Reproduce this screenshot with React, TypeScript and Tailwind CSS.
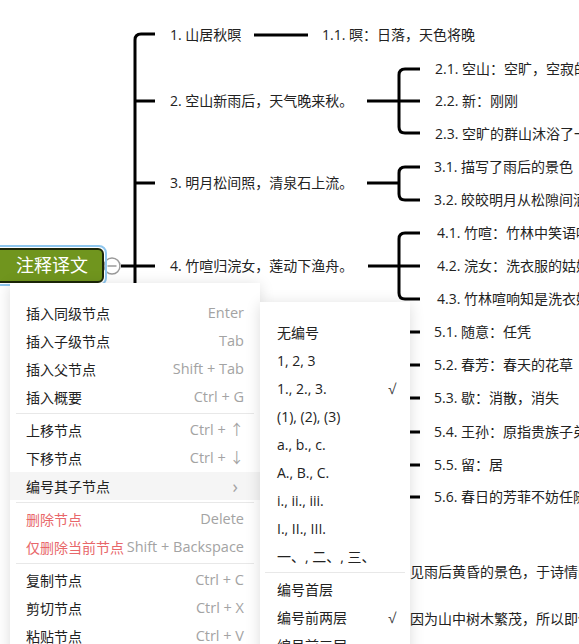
import React from "react";

const font = { fontFamily: '"Open Sans", "Noto Sans CJK SC", sans-serif' };

type N = { x: number; y: number; t: string };

const nodes: N[] = [
  { x: 170, y: 35, t: "1. 山居秋暝" },
  { x: 170, y: 101, t: "2. 空山新雨后，天气晚来秋。" },
  { x: 170, y: 183, t: "3. 明月松间照，清泉石上流。" },
  { x: 170, y: 266, t: "4. 竹喧归浣女，莲动下渔舟。" },
  { x: 322, y: 35, t: "1.1. 暝：日落，天色将晚" },
  { x: 435, y: 69, t: "2.1. 空山：空旷，空寂的山野" },
  { x: 435, y: 101, t: "2.2. 新：刚刚" },
  { x: 435, y: 134, t: "2.3. 空旷的群山沐浴了一场新雨" },
  { x: 434, y: 167, t: "3.1. 描写了雨后的景色" },
  { x: 434, y: 200, t: "3.2. 皎皎明月从松隙间洒下清光" },
  { x: 437, y: 233, t: "4.1. 竹喧：竹林中笑语喧哗" },
  { x: 437, y: 266, t: "4.2. 浣女：洗衣服的姑娘" },
  { x: 437, y: 299, t: "4.3. 竹林喧响知是洗衣姑娘归来" },
  { x: 434, y: 332, t: "5.1. 随意：任凭" },
  { x: 434, y: 365, t: "5.2. 春芳：春天的花草" },
  { x: 434, y: 398, t: "5.3. 歇：消散，消失" },
  { x: 434, y: 432, t: "5.4. 王孙：原指贵族子弟" },
  { x: 434, y: 465, t: "5.5. 留：居" },
  { x: 434, y: 497, t: "5.6. 春日的芳菲不妨任随它消歇" },
  { x: 410, y: 572, t: "见雨后黄昏的景色，于诗情画意之中" },
  { x: 410, y: 619, t: "因为山中树木繁茂，所以即使下雨" },
];

const menu1: ({ l: string; s: string; red?: boolean; hl?: boolean } | "div")[] = [
  { l: "插入同级节点", s: "Enter" },
  { l: "插入子级节点", s: "Tab" },
  { l: "插入父节点", s: "Shift + Tab" },
  { l: "插入概要", s: "Ctrl + G" },
  "div",
  { l: "上移节点", s: "Ctrl + ↑" },
  { l: "下移节点", s: "Ctrl + ↓" },
  { l: "编号其子节点", s: "›", hl: true },
  "div",
  { l: "删除节点", s: "Delete", red: true },
  { l: "仅删除当前节点", s: "Shift + Backspace", red: true },
  "div",
  { l: "复制节点", s: "Ctrl + C" },
  { l: "剪切节点", s: "Ctrl + X" },
  { l: "粘贴节点", s: "Ctrl + V" },
];

const menu2: ({ l: string; c?: boolean } | "div")[] = [
  { l: "无编号" },
  { l: "1, 2, 3" },
  { l: "1., 2., 3.", c: true },
  { l: "(1), (2), (3)" },
  { l: "a., b., c." },
  { l: "A., B., C." },
  { l: "i., ii., iii." },
  { l: "I., II., III." },
  { l: "一、, 二、, 三、" },
  "div",
  { l: "编号首层" },
  { l: "编号前两层", c: true },
  { l: "编号前三层" },
];

export default function App() {
  return (
    <div
      className="relative w-[579px] h-[644px] overflow-hidden bg-white text-[14px] text-[#222]"
      style={font}
    >
      <svg className="absolute left-0 top-0" width="579" height="644" fill="none" stroke="#000" strokeWidth="3" strokeLinecap="butt">
        <path d="M121 266 H155" />
        <path d="M155 34 H141 Q135 34 135 40 V644" />
        <path d="M135 101 H155 M135 183 H155" />
        <path d="M254 35 H308" />
        <path d="M367 101 H399 M420 69 H405 Q399 69 399 75 V127 Q399 133 405 133 H420 M399 101 H420" />
        <path d="M367 183 H399 M420 167 H405 Q399 167 399 173 V194 Q399 200 405 200 H420" />
        <path d="M368 266 H399 M420 233 H405 Q399 233 399 239 V293 Q399 299 405 299 H420 M399 266 H420" />
        <path d="M367 414 H399 M420 332 H405 Q399 332 399 338 V491 Q399 497 405 497 H420 M399 365 H420 M399 398 H420 M399 432 H420 M399 465 H420" />
        <circle cx="112" cy="266" r="8" fill="#fff" stroke="#9a9a9a" strokeWidth="1.5" />
        <path d="M107.5 266 H116.5" stroke="#9a9a9a" strokeWidth="1.5" />
      </svg>

      {nodes.map((n, i) => (
        <div
          key={i}
          className="absolute whitespace-nowrap leading-[20px]"
          style={{ left: n.x, top: n.y - 10 }}
        >
          {n.t}
        </div>
      ))}

      {/* root node */}
      <div className="absolute left-[-24px] top-[245px] rounded-[8px] border-2 border-[#8ec6ee] p-px">
        <div className="w-[125px] h-[35px] rounded-[6px] border-2 border-[#1c2608] bg-[#70951e] flex items-center justify-end pr-[14px] text-white text-[18px]">
          注释译文
        </div>
      </div>

      {/* context menu */}
      <div className="absolute left-[10px] top-[283px] w-[250px] bg-white pt-[16px] pb-2 shadow-[0_2px_14px_rgba(0,0,0,0.14)]">
        {menu1.map((m, i) =>
          m === "div" ? (
            <div key={i} className="mx-[6px] my-[2px] h-px bg-[#e8e8e8]" />
          ) : (
            <div
              key={i}
              className={`flex h-[28px] items-center justify-between pl-[16px] pr-[16px] whitespace-nowrap ${m.hl ? "bg-[#f5f5f5]" : ""}`}
            >
              <span className={m.red ? "text-[#e8676a]" : "text-[#222]"}>{m.l}</span>
              <span className={`text-[#a3a3a3] ${m.s === "›" ? "text-[18px] pr-[6px]" : "text-[14.5px]"}`}>{m.s}</span>
            </div>
          )
        )}
      </div>

      {/* submenu */}
      <div className="absolute left-[260px] top-[302px] w-[150px] bg-white pt-[16px] pb-2 shadow-[0_2px_14px_rgba(0,0,0,0.14)]">
        {menu2.map((m, i) =>
          m === "div" ? (
            <div key={i} className="mx-[5px] my-[2px] h-px bg-[#e8e8e8]" />
          ) : (
            <div key={i} className="flex h-[28px] items-center justify-between pl-[17px] pr-[14px] whitespace-nowrap text-[#222]">
              <span>{m.l}</span>
              {m.c ? <span className="text-[#444]">√</span> : null}
            </div>
          )
        )}
      </div>
    </div>
  );
}
